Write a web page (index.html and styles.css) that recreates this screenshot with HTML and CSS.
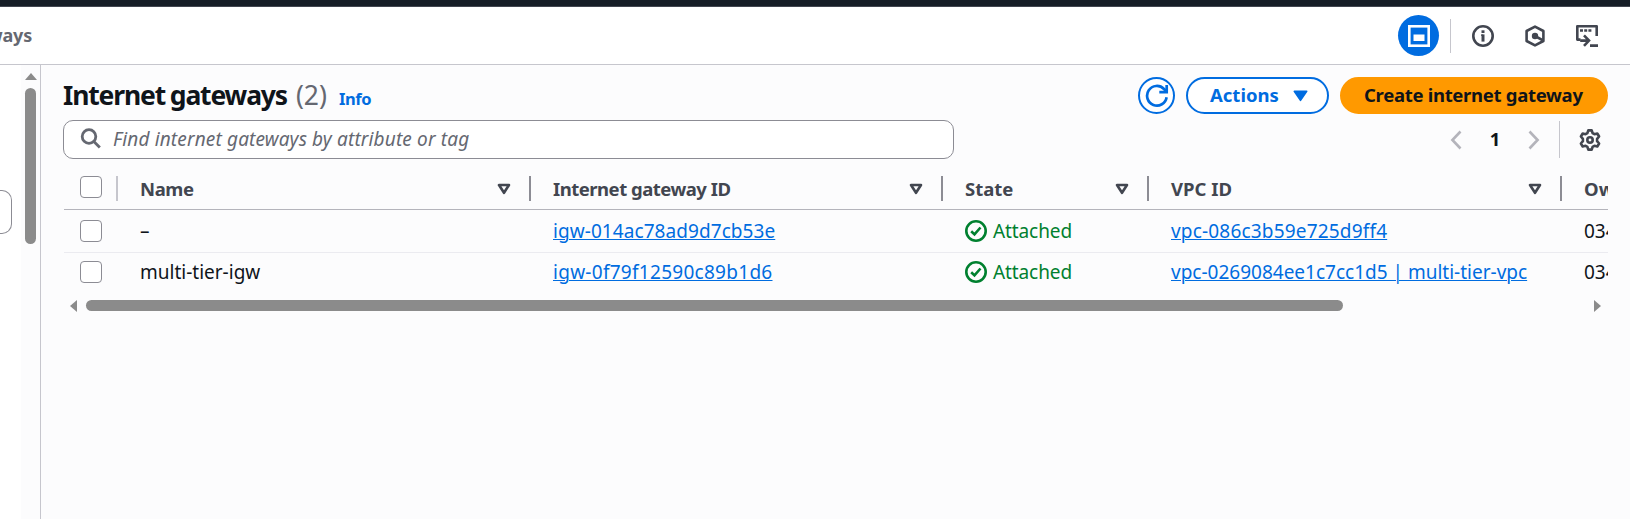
FILE: index.html
```html
<!DOCTYPE html>
<html lang="en">
<head>
<meta charset="utf-8">
<title>Internet gateways</title>
<link rel="stylesheet" href="styles.css">
</head>
<body>
<div class="topbar"></div>
<header class="header">
  <div class="crumb"><span class="t-crumb">Internet gateways</span></div>
  <div class="tools">
    <span class="tool-active"><svg width="22" height="22" viewBox="0 0 22 22" fill="none"><rect x="1.300" y="1.300" width="19.400" height="19.400" stroke="#fff" stroke-width="2.600"/><rect x="5.500" y="9.500" width="11" height="6.500" fill="#fff"/></svg></span>
    <span class="tools-divider"></span>
    <svg class="i-info" width="22" height="22" viewBox="0 0 22 22" fill="none" stroke="#424650"><circle cx="11" cy="11" r="9.700" stroke-width="2.600"/><path d="M11 5.300v2.700" stroke-width="3"/><path d="M11 9.400v7.200" stroke-width="3"/><path d="M9 10.100h2" stroke-width="1.400"/></svg>
    <svg class="i-hex" width="22" height="22" viewBox="0 0 22 22" fill="none" stroke="#424650" stroke-width="2.600"><path d="M11 1.600 19.400 6v10L11 20.400 2.600 16V6z" stroke-linejoin="round"/><circle cx="11" cy="11" r="3.200" fill="#424650" stroke="none"/><path d="m11 11 7.500 4.200"/></svg>
    <svg class="i-shell" width="22" height="22" viewBox="0 0 22 22" fill="none" stroke="#424650" stroke-width="2.600"><path d="M4.500 14.600H1.300V1.300h19.400V11" stroke-linejoin="round"/><path d="M4 5.500h3M8.200 5.500h3M12.400 5.500h3M14 20.600h8"/><path d="M4.200 15.600h8M8 10.400l5 5.200-5 5.200"/></svg>
  </div>
</header>
<div class="body">
  <aside class="side">
    <div class="side-content"><div class="side-input"></div></div>
    <div class="side-scroll"><span class="arrow-up"></span><span class="side-thumb"></span></div>
  </aside>
  <main class="main">
    <div class="title-row">
      <h1 class="title"><span class="t-title">Internet gateways</span> <span class="count">(2)</span></h1>
      <a class="info">Info</a>
      <div class="actions">
        <span class="btn btn-round"><svg width="24" height="24" viewBox="0 0 24 24" fill="none" stroke="#006ce0" stroke-width="2.700"><path d="M21.600 13.200A9.800 9.800 0 1 1 19 5l2.400 2.600"/><path d="M21.700 1v7.200h-7.400"/></svg></span>
        <span class="btn btn-normal"><span class="t-actions">Actions</span><svg width="15" height="12" viewBox="0 0 15 12"><path d="M1.300 1.300h12.400L7.500 10.300z" fill="#006ce0" stroke="#006ce0" stroke-width="1.600" stroke-linejoin="round"/></svg></span>
        <span class="btn btn-primary"><span class="t-create">Create internet gateway</span></span>
      </div>
    </div>
    <div class="filter-row">
      <div class="search"><svg width="22" height="22" viewBox="0 0 22 22" fill="none" stroke="#656871" stroke-width="2.800"><circle cx="9" cy="8.500" r="6.800"/><path d="m13.800 13.400 6 6"/></svg><span class="t-find">Find internet gateways by attribute or tag</span></div>
      <div class="pager">
        <svg width="12" height="20" viewBox="0 0 12 20" fill="none" stroke="#b4b4bb" stroke-width="2.600"><path d="M10.500 1.500 2.400 10l8.100 8.500"/></svg>
        <span class="page">1</span>
        <svg width="12" height="20" viewBox="0 0 12 20" fill="none" stroke="#b4b4bb" stroke-width="2.600"><path d="M1.500 1.500 9.600 10l-8.100 8.500"/></svg>
        <span class="pager-divider"></span>
        <svg class="gear" width="22" height="22" viewBox="0 0 22 22" fill="none" stroke="#424650" stroke-width="2.600"><path stroke-linejoin="round" d="M9.300 1.400h3.400l.9 2.800 1.800 1 2.900-.7 1.800 3-2 2.300v2.400l2 2.300-1.800 3-2.900-.7-1.800 1-.9 2.800H9.300l-.9-2.800-1.800-1-2.900.7-1.800-3 2-2.300V9.800l-2-2.300 1.800-3 2.900.7 1.800-1z"/><circle cx="11" cy="11" r="2.700"/></svg>
      </div>
    </div>
    <div class="table">
      <div class="row head">
        <div class="cell check"><span class="box"></span><span class="sep light"></span></div>
        <div class="cell"><span class="t-h1">Name</span><svg class="sort" width="14" height="12" viewBox="0 0 14 12"><path d="M2 2h10L7 9.800z" /></svg><span class="sep"></span></div>
        <div class="cell"><span class="t-h2">Internet gateway ID</span><svg class="sort" width="14" height="12" viewBox="0 0 14 12"><path d="M2 2h10L7 9.800z" /></svg><span class="sep"></span></div>
        <div class="cell"><span class="t-h3">State</span><svg class="sort" width="14" height="12" viewBox="0 0 14 12"><path d="M2 2h10L7 9.800z" /></svg><span class="sep"></span></div>
        <div class="cell"><span class="t-h4">VPC ID</span><svg class="sort" width="14" height="12" viewBox="0 0 14 12"><path d="M2 2h10L7 9.800z" /></svg><span class="sep"></span></div>
        <div class="cell"><span class="t-h5">Owner</span></div>
      </div>
      <div class="row first">
        <div class="cell check"><span class="box"></span></div>
        <div class="cell"><span>–</span></div>
        <div class="cell"><a class="link t-igw1">igw-014ac78ad9d7cb53e</a></div>
        <div class="cell state"><svg width="22" height="22" viewBox="0 0 22 22" fill="none" stroke="#00802f" stroke-width="2.600"><circle cx="11" cy="11" r="9.700"/><path d="m6.200 11.200 3.300 3.200 6-6.900"/></svg><span class="t-att">Attached</span></div>
        <div class="cell"><a class="link t-vpc1">vpc-086c3b59e725d9ff4</a></div>
        <div class="cell"><span class="t-own">034</span></div>
      </div>
      <div class="row second">
        <div class="cell check"><span class="box"></span></div>
        <div class="cell"><span class="t-multi">multi-tier-igw</span></div>
        <div class="cell"><a class="link t-igw2">igw-0f79f12590c89b1d6</a></div>
        <div class="cell state"><svg width="22" height="22" viewBox="0 0 22 22" fill="none" stroke="#00802f" stroke-width="2.600"><circle cx="11" cy="11" r="9.700"/><path d="m6.200 11.200 3.300 3.200 6-6.900"/></svg><span class="t-att">Attached</span></div>
        <div class="cell"><a class="link t-vpc2">vpc-0269084ee1c7cc1d5 | multi-tier-vpc</a></div>
        <div class="cell"><span class="t-own">034</span></div>
      </div>
    </div>
    <div class="hscroll"><span class="arrow-left"></span><span class="hthumb"></span><span class="arrow-right"></span></div>
  </main>
</div>
</body>
</html>
```
FILE: styles.css
```css
* { box-sizing: border-box; }
body { margin: 0; height: 519px; overflow: hidden; display: flex; flex-direction: column; background: #fcfcfd; color: #0f141a; font: 19px/24px "Noto Sans", sans-serif; }
svg { display: block; flex: none; }
span, a { white-space: nowrap; }
.topbar { height: 7px; flex: none; background: #161d26; border-bottom: 1px solid #424650; }
.header { height: 58px; flex: none; display: flex; justify-content: space-between; background: #fff; border-bottom: 1px solid #c6c6cd; }
.crumb { width: 32px; overflow: hidden; display: flex; justify-content: flex-end; padding-top: 16px; font-weight: 700; font-size: 18px; letter-spacing: -0.2px; color: #656871; }
.tools { display: flex; align-items: center; height: 57px; padding-right: 32px; }
.tool-active { width: 41px; height: 41px; border-radius: 50%; background: #006ce0; display: grid; place-items: center; }
.tools-divider { width: 1px; height: 34px; margin: 0 21px 0 11px; background: #c6c6cd; }
.i-hex { margin: 0 30px; }
.body { flex: 1; display: flex; }
.side { width: 41px; display: flex; border-right: 1px solid #c6c6cd; }
.side-content { width: 21px; background: #fff; padding-top: 125px; }
.side-input { width: 12px; height: 44px; border: 1px solid #8c8c94; border-left: 0; border-radius: 0 10px 10px 0; }
.side-scroll { width: 19px; display: flex; flex-direction: column; align-items: center; padding: 8px 0 0 0; }
.arrow-up { border: 6.5px solid transparent; border-top: 0; border-bottom: 7px solid #8b8b8b; }
.side-thumb { margin-top: 8px; width: 11px; height: 156px; border-radius: 6px; background: #8b8b8b; }
.main { flex: 1; min-width: 0; padding: 12px 22px 0; }
.title-row { display: flex; height: 37px; }
.title { margin: 0; font-size: 26.5px; line-height: 36px; width: 276px; white-space: nowrap; word-spacing: -1px; }
.t-title { letter-spacing: -1.15px; }
.count { font-weight: 400; color: #656871; margin-left: 3px; }
.info { font-size: 16.5px; font-weight: 700; color: #006ce0; padding-top: 10px; letter-spacing: -0.4px; }
.actions { margin-left: auto; display: flex; gap: 11px; font-weight: 700; font-size: 18.5px; }
.t-actions, .t-create { position: relative; top: -1px; }
.t-create { letter-spacing: -0.3px; }
.btn { height: 37px; border-radius: 19px; display: flex; align-items: center; background: #fff; border: 2px solid #006ce0; color: #006ce0; }
.btn-round { width: 37px; justify-content: center; }
.btn-normal { width: 143px; padding: 0 19px 0 22px; justify-content: space-between; }
.btn-primary { width: 268px; background: #ff9900; border-color: #ff9900; color: #0f141a; padding-left: 22px; }
.filter-row { display: flex; justify-content: space-between; padding-top: 6px; height: 46px; }
.search { width: 891px; height: 39px; border: 1px solid #8c8c94; border-radius: 10px; background: #fff; display: flex; align-items: center; gap: 11px; padding: 0 0 1px 16px; font-style: italic; color: #656871; }
.t-find { letter-spacing: 0.15px; }
.pager { display: flex; align-items: center; height: 39px; padding-right: 7px; }
.page { width: 66px; text-align: center; font-weight: 700; font-size: 18.5px; padding-bottom: 1px; }
.pager-divider { width: 1px; height: 37px; background: #c6c6cd; margin: 0 19px 0 19px; }
.table { margin-left: 1px; overflow: hidden; }
.row { display: grid; width: 1700px; grid-template-columns: 54px 413px 412px 206px 413px 200px; align-items: center; }
.head { height: 50px; padding-top: 8px; border-bottom: 1px solid #b4b4bb; font-weight: 700; font-size: 18.5px; color: #424650; }
.head .box { margin-bottom: 3px; }
.first { height: 43px; border-bottom: 1px solid #ebebf0; }
.second { height: 38px; }
.cell { display: flex; align-items: center; height: 25px; padding-left: 22px; }
.check { padding-left: 16px; }
.box { width: 22px; height: 22px; border: 1.5px solid #8c8c94; border-radius: 4px; background: #fff; }
.sort { margin-left: auto; margin-right: 18px; fill: none; stroke: #424650; stroke-width: 2.6; stroke-linejoin: round; }
.sep { width: 2px; height: 25px; background: #8c8c94; }
.light { background: #c6c6cd; margin-left: 14px; }
.link { color: #006ce0; text-decoration: underline; text-underline-offset: 1px; text-decoration-thickness: 1px; text-decoration-skip-ink: auto; }
.t-h1 { letter-spacing: -0.4px; }
.t-h2 { letter-spacing: -0.5px; }
.t-igw1 { letter-spacing: 0.07px; }
.t-igw2 { letter-spacing: 0.28px; }
.t-vpc1 { letter-spacing: 0.18px; }
.t-att { letter-spacing: -0.1px; }
.state { color: #00802f; gap: 6px; }
.hscroll { display: flex; align-items: center; height: 15px; padding: 0 7px; margin-top: 7px; }
.arrow-left { border: 6.5px solid transparent; border-left: 0; border-right: 7px solid #8b8b8b; }
.arrow-right { border: 6.5px solid transparent; border-right: 0; border-left: 7px solid #8b8b8b; margin-left: auto; }
.hthumb { width: 1257px; height: 11px; margin-left: 9px; border-radius: 6px; background: #8b8b8b; }
```
